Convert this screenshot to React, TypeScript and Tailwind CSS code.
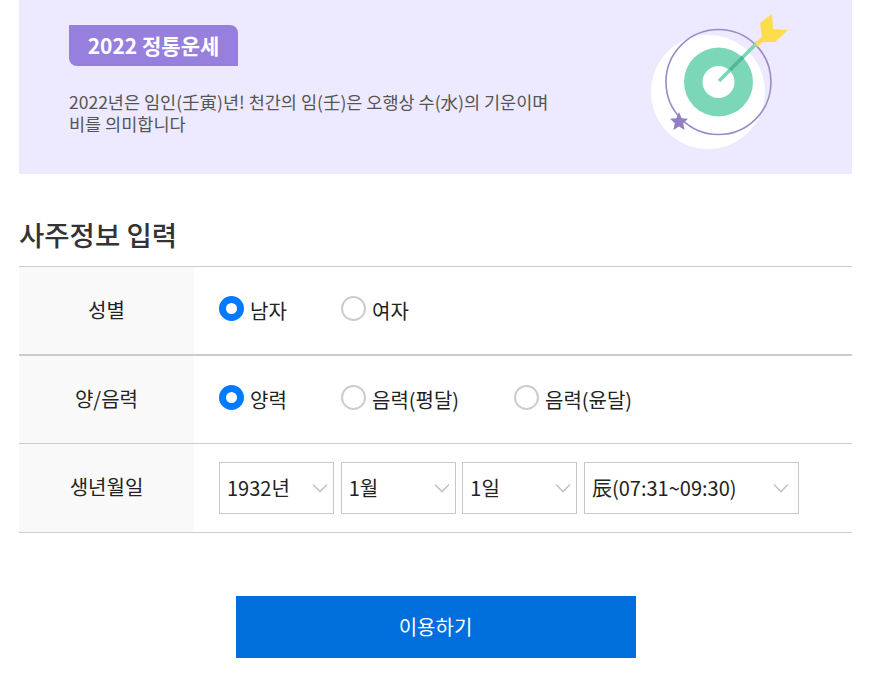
const FONT = "font-['Noto_Sans_CJK_KR','Noto_Sans',sans-serif]";

function Target() {
  return (
    <svg width="160" height="160" viewBox="0 0 160 160" className="shrink-0">
      <circle cx="68" cy="92" r="57" fill="#ffffff" />
      <circle cx="78.5" cy="82" r="52.5" fill="none" stroke="#9b8cc6" strokeWidth="1.6" />
      <circle cx="78.5" cy="82" r="34.5" fill="#7bd7b8" />
      <circle cx="78.5" cy="82" r="16" fill="#ffffff" />
      <path d="M79 81 L118 42" stroke="#7bd7b8" strokeWidth="3.5" />
      <path d="M90 70 L103 57" stroke="#55b594" strokeWidth="3.5" />
      <path d="M115 43 L122 37 L120 23 L132 14 L133 29 L148 30 L135 42 L123 42 L117 47 Z" fill="#ffdc4e" />
      <path d="M39 112 L41.6 118.2 L48 118.8 L43.2 123.2 L44.6 130 L39 126.5 L33.4 130 L34.8 123.2 L30 118.8 L36.4 118.2 Z" fill="#927fc2" />
    </svg>
  );
}

function Radio({ label, checked, width }: { label: string; checked?: boolean; width: string }) {
  return (
    <div className={`flex items-center ${width}`}>
      <span
        className={
          checked
            ? "mb-[5px] h-[25px] w-[25px] rounded-full border-[7px] border-[#007bff] bg-white"
            : "mb-[5px] h-[25px] w-[25px] rounded-full border-[2.5px] border-[#cccccc] bg-white"
        }
      />
      <span className="ml-[6px] text-[20px] leading-[28px] text-[#222222]">{label}</span>
    </div>
  );
}

function Select({ value, width, pad }: { value: string; width: string; pad: string }) {
  return (
    <div className={`flex h-[52px] items-center justify-between border border-[#c8c8c8] bg-white pl-[7px] ${pad} ${width}`}>
      <span className="text-[20px] leading-[28px] text-[#222222]">{value}</span>
      <svg width="16" height="10" viewBox="0 0 16 10" fill="none" stroke="#c4c4c4" strokeWidth="1.6">
        <path d="M1 1.5 L8 8.5 L15 1.5" />
      </svg>
    </div>
  );
}

function Row({ label, children, className }: { label: string; children: React.ReactNode; className: string }) {
  return (
    <div className={`flex ${className}`}>
      <div className="flex w-[175px] items-center justify-center bg-[#f9f9f9] pb-[2px] text-[20px] text-[#222222]">{label}</div>
      <div className="flex flex-1 items-center pl-[25px]">{children}</div>
    </div>
  );
}

export default function App() {
  return (
    <div className={`h-[695px] w-[881px] overflow-hidden bg-white pl-[19px] pr-[29px] ${FONT}`}>
      <section className="flex h-[174px] items-start justify-between bg-[#ede9fe] pl-[50px] pr-[52px]">
        <div className="pt-[25px]">
          <div className="flex h-[41px] w-[169px] items-center justify-center rounded-tr-[8px] rounded-bl-[8px] bg-[#9780dd] text-[21px] font-semibold text-white">
            2022 정통운세
          </div>
          <p className="mt-[25px] w-[500px] text-[17.5px] leading-[21.5px] text-[#555555]">
            2022년은 임인(壬寅)년! 천간의 임(壬)은 오행상 수(水)의 기운이며
            <br />
            비를 의미합니다
          </p>
        </div>
        <Target />
      </section>

      <h2 className="mt-[40px] h-[52px] text-[27.5px] font-medium leading-[40px] text-[#333333]">사주정보 입력</h2>

      <div className="border-t border-[#cccccc]">
        <Row label="성별" className="h-[89px] border-b-2 border-[#cccccc]">
          <Radio label="남자" checked width="w-[122px]" />
          <Radio label="여자" width="w-[120px]" />
        </Row>
        <Row label="양/음력" className="h-[88px] border-b border-[#cccccc]">
          <Radio label="양력" checked width="w-[122px]" />
          <Radio label="음력(평달)" width="w-[173px]" />
          <Radio label="음력(윤달)" width="w-[150px]" />
        </Row>
        <Row label="생년월일" className="h-[89px] border-b border-[#cccccc]">
          <div className="flex gap-[6.67px]">
            <Select value="1932년" width="w-[115px]" pad="pr-[5px]" />
            <Select value="1월" width="w-[115px]" pad="pr-[5px]" />
            <Select value="1일" width="w-[115px]" pad="pr-[5px]" />
            <Select value="辰(07:31~09:30)" width="w-[215px]" pad="pr-[9px]" />
          </div>
        </Row>
      </div>

      <div className="mt-[63px] flex justify-center">
        <button className="h-[62px] w-[400px] bg-[#006fdc] text-[20px] text-white">이용하기</button>
      </div>
    </div>
  );
}
